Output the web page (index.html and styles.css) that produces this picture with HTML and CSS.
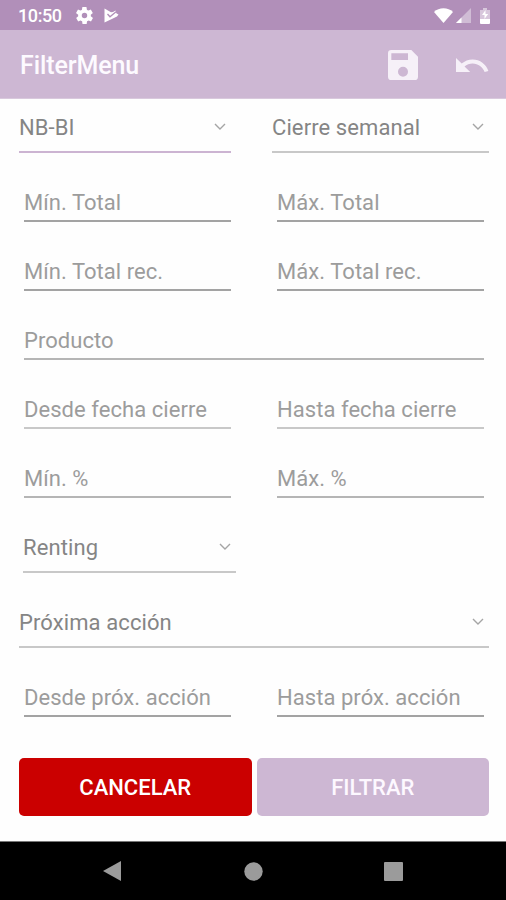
FILE: index.html
```
<!DOCTYPE html>
<html lang="es">
<head>
    <meta charset="UTF-8">
    <meta name="viewport" content="width=device-width, initial-scale=1.0">
    <title>FilterMenu</title>
    <link rel="stylesheet" href="styles.css">
</head>
<body>
    <div class="status-bar">
        <span class="clock">10:50</span>
        <svg class="icon-gear" viewBox="2 2 20 20" width="17" height="17"><path fill-rule="evenodd" d="M19.4 13a7.500 7.500 0 0 0 0-2l2.100-1.600c.2-.2.3-.5.1-.7l-2-3.400c-.1-.2-.4-.3-.6-.2l-2.500 1a7.300 7.300 0 0 0-1.700-1l-.4-2.700a.5.5 0 0 0-.5-.4h-4a.5.5 0 0 0-.5.4l-.4 2.700a7.300 7.300 0 0 0-1.700 1l-2.500-1c-.2-.1-.5 0-.6.200l-2 3.400c-.1.200-.1.500.1.700L4.600 11a7.500 7.500 0 0 0 0 2l-2.100 1.600c-.2.200-.2.500-.1.700l2 3.400c.1.200.4.300.6.200l2.500-1c.5.400 1.100.7 1.700 1l.4 2.700c0 .2.200.4.500.4h4c.2 0 .5-.2.500-.4l.4-2.700c.6-.3 1.200-.6 1.700-1l2.500 1c.2.100.5 0 .6-.2l2-3.400c.1-.2.1-.5-.1-.7zM12 15.200a3.200 3.200 0 1 1 0-6.400 3.200 3.200 0 0 1 0 6.400z"/></svg>
        <svg class="icon-play" viewBox="0 0 15 15" width="15" height="15"><path d="M.5.500 7 4.200l2-.2 2.500-1.500.8 2.800 2.200 1.200L13 8.500.5 14.500z"/><path class="check" d="M3.500 6 6 8.800 12 3.800"/></svg>
        <div class="status-right">
            <svg viewBox="0 0 19 15" width="19" height="15"><path d="M0 4C5-1 14-1 19 4L9.500 15z"/></svg>
            <svg viewBox="0 0 15 15" width="15" height="15"><path opacity=".4" d="M15 0v15H0z"/><path d="M5.500 9.500V15H0z"/></svg>
            <svg class="icon-battery" viewBox="0 0 10 16" width="10" height="16"><path opacity=".5" d="M3 0h4v2h3v9H0V2h3z"/><path d="M0 11h10v4a1 1 0 0 1-1 1H1a1 1 0 0 1-1-1z"/><path d="M5.500 2 2 7h2.500v4L8.200 6H5.500z"/></svg>
        </div>
    </div>

    <div class="toolbar">
        <h1>FilterMenu</h1>
        <svg class="icon-save" viewBox="3 3 18 18" width="30" height="30"><path d="M17 3H5a2 2 0 0 0-2 2v14a2 2 0 0 0 2 2h14a2 2 0 0 0 2-2V7l-4-4zm-5 16a3 3 0 1 1 0-6 3 3 0 0 1 0 6zm3-10H5V5h10v4z"/></svg>
        <svg class="icon-undo" viewBox="2 7 21.500 9" width="34" height="16"><path d="M12.500 8c-2.650 0-5.050.99-6.900 2.600L2 7v9h9l-3.620-3.620c1.390-1.160 3.160-1.880 5.120-1.880 3.540 0 6.550 2.310 7.600 5.500l2.370-.78C21.080 11.030 17.150 8 12.500 8z"/></svg>
    </div>

    <form class="filters">
        <div class="row first">
            <div class="spinner active"><span>NB-BI</span><svg class="arrow" viewBox="0 0 12 8"><path d="M1 1l5 5 5-5"/></svg></div>
            <div class="spinner"><span>Cierre semanal</span><svg class="arrow" viewBox="0 0 12 8"><path d="M1 1l5 5 5-5"/></svg></div>
        </div>
        <div class="row">
            <input type="text" placeholder="Mín. Total">
            <input type="text" placeholder="Máx. Total">
        </div>
        <div class="row">
            <input type="text" placeholder="Mín. Total rec.">
            <input type="text" placeholder="Máx. Total rec.">
        </div>
        <div class="row">
            <input class="wide light" type="text" placeholder="Producto">
        </div>
        <div class="row">
            <input class="soft" type="text" placeholder="Desde fecha cierre">
            <input class="soft" type="text" placeholder="Hasta fecha cierre">
        </div>
        <div class="row">
            <input class="light" type="text" placeholder="Mín. %">
            <input class="light" type="text" placeholder="Máx. %">
        </div>
        <div class="row tall">
            <div class="spinner inset"><span>Renting</span><svg class="arrow" viewBox="0 0 12 8"><path d="M1 1l5 5 5-5"/></svg></div>
        </div>
        <div class="row tall">
            <div class="spinner wide"><span>Próxima acción</span><svg class="arrow" viewBox="0 0 12 8"><path d="M1 1l5 5 5-5"/></svg></div>
        </div>
        <div class="row last">
            <input type="text" placeholder="Desde próx. acción">
            <input type="text" placeholder="Hasta próx. acción">
        </div>
        <div class="buttons">
            <button type="button" class="cancel">CANCELAR</button>
            <button type="button" class="filter">FILTRAR</button>
        </div>
    </form>

    <div class="nav-bar">
        <svg viewBox="0 0 19 22" width="19" height="22"><path d="M18 1v20L0 11z"/></svg>
        <svg viewBox="0 0 19 19" width="19" height="19"><circle cx="9.500" cy="9.500" r="9.200"/></svg>
        <svg viewBox="0 0 19 19" width="19" height="19"><rect width="19" height="19" rx="1"/></svg>
    </div>
</body>
</html>
```
FILE: styles.css
```
* {
    box-sizing: border-box;
}
body {
    margin: 0;
    height: 900px;
    display: flex;
    flex-direction: column;
    font-family: Roboto, "Liberation Sans", sans-serif;
    background-color: #fefefe;
    overflow: hidden;
}
svg {
    display: block;
    flex: none;
}

/* Status bar */
.status-bar {
    height: 30px;
    display: flex;
    align-items: center;
    padding: 1px 16px 0 18px;
    background-color: #b18fb9;
    color: #fff;
    fill: #fff;
}
.clock {
    width: 57px;
    font-size: 18px;
    font-weight: 500;
    letter-spacing: -0.4px;
}
.icon-gear {
    margin-left: 1px;
}
.icon-play {
    margin-left: 11px;
}
.icon-play .check {
    fill: none;
    stroke: #b18fb9;
    stroke-width: 1.3;
}
.status-right {
    display: flex;
    align-items: center;
    gap: 3px;
    margin-left: auto;
}
.icon-battery {
    margin-left: 6px;
}

/* Toolbar */
.toolbar {
    height: 69px;
    display: flex;
    align-items: center;
    padding: 1px 16px 0 20px;
    background-color: #cdb7d3;
    border-bottom: 1px solid #d9c9dd;
    fill: #f6f0f8;
}
h1 {
    margin: 0 auto 0 0;
    padding-top: 3px;
    font-size: 25px;
    font-weight: 500;
    line-height: 30px;
    letter-spacing: -0.1px;
    color: #fdfaff;
}
.icon-undo {
    margin-left: 38px;
}

/* Filters */
.filters {
    flex: 1;
    padding: 0 17px 0 19px;
}
.row {
    display: grid;
    grid-template-columns: 216px 217px;
    column-gap: 37px;
    align-items: end;
    height: 69px;
}
.row.first {
    height: 54px;
}
.row.tall {
    height: 75px;
}
.wide {
    grid-column: 1 / 3;
}
input {
    height: 34px;
    min-width: 0;
    margin: 0 4px 0 5px;
    padding: 0 0 3px;
    border: none;
    border-bottom: 2px solid #a3a3a3;
    border-radius: 0;
    background: none;
    font-family: inherit;
    font-size: 22px;
    letter-spacing: 0.05px;
    outline: none;
}
input:nth-child(2),
input.wide {
    margin-right: 5px;
}
input::placeholder {
    color: #9c9c9c;
    opacity: 1;
}
input.light {
    border-color: #b5b5b5;
}
input.soft {
    border-color: #c8c8c8;
}
.spinner {
    display: flex;
    align-items: center;
    justify-content: space-between;
    height: 50px;
    padding: 0 5px 0 0;
    border-bottom: 2px solid #c8c8c8;
    font-size: 22px;
    letter-spacing: 0.1px;
    color: #858585;
}
.spinner.active {
    margin-right: 4px;
    border-color: #ccb4d2;
}
.spinner.inset {
    margin: 0 -1px 0 4px;
}
.arrow {
    width: 12px;
    height: 8px;
    fill: none;
    stroke: #a5a5a5;
    stroke-width: 1.4;
}

/* Buttons */
.buttons {
    display: flex;
    gap: 5px;
    margin-top: 41px;
}
button {
    flex: 1;
    height: 58px;
    border: none;
    border-radius: 5px;
    font-family: inherit;
    font-size: 22px;
    font-weight: 500;
    color: #fff;
}
.cancel {
    background-color: #cb0000;
}
.filter {
    background-color: #cdb7d3;
    color: #fdf8ff;
}

/* Navigation bar */
.nav-bar {
    height: 59px;
    display: flex;
    align-items: center;
    justify-content: space-between;
    padding: 0 103px;
    background-color: #000;
    border-top: 1px solid #777;
    fill: #9b9b9b;
}
```
